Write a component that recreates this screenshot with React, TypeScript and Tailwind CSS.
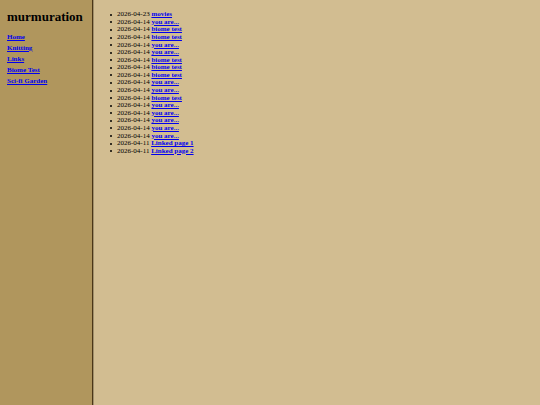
import React from 'react';

const NAV_LINKS = ['Home', 'Knitting', 'Links', 'Biome Test', 'Sci-fi Garden'];

const POSTS = [
  { date: '2026-04-23', title: 'movies' },
  { date: '2026-04-14', title: 'you are...' },
  { date: '2026-04-14', title: 'biome test' },
  { date: '2026-04-14', title: 'biome test' },
  { date: '2026-04-14', title: 'you are...' },
  { date: '2026-04-14', title: 'you are...' },
  { date: '2026-04-14', title: 'biome test' },
  { date: '2026-04-14', title: 'biome test' },
  { date: '2026-04-14', title: 'biome test' },
  { date: '2026-04-14', title: 'you are...' },
  { date: '2026-04-14', title: 'you are...' },
  { date: '2026-04-14', title: 'biome test' },
  { date: '2026-04-14', title: 'you are...' },
  { date: '2026-04-14', title: 'you are...' },
  { date: '2026-04-14', title: 'you are...' },
  { date: '2026-04-14', title: 'you are...' },
  { date: '2026-04-14', title: 'you are...' },
  { date: '2026-04-11', title: 'Linked page 1' },
  { date: '2026-04-11', title: 'Linked page 2' },
];

const App: React.FC = () => {
  return (
    <div className="flex min-h-screen bg-[#d2bd91] font-['Liberation_Serif',serif] text-[7px] leading-[7px] text-black">
      <aside className="shrink-0 w-[93px] pl-[7px] pt-2 bg-[#b0965d] border-r border-[#4b3617]">
        <h1 className="text-[13px] leading-[18px] font-bold">murmuration</h1>
        <nav className="flex flex-col items-start gap-1 mt-2">
          {NAV_LINKS.map((label) => (
            <a key={label} href="#" className="font-bold text-[#0000ee] underline">
              {label}
            </a>
          ))}
        </nav>
      </aside>
      <main className="flex-1 border-l border-[#a08f6b] pl-4 pt-[11px]">
        <ul className="grid min-h-36">
          {POSTS.map((post, i) => (
            <li key={i} className="flex items-center gap-[5px]">
              <span className="size-[2px] rounded-full bg-black" />
              <span>
                {post.date}{' '}
                <a href="#" className="font-bold text-[#0000ee] underline">{post.title}</a>
              </span>
            </li>
          ))}
        </ul>
      </main>
    </div>
  );
};

export default App;
